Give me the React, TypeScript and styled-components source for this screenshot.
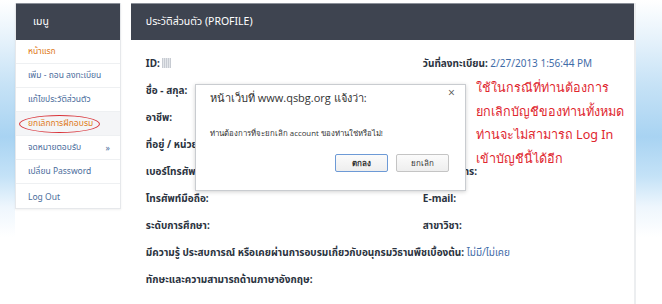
import React from "react";
import styled, { createGlobalStyle } from "styled-components";

const Global = createGlobalStyle`
  html, body { margin: 0; padding: 0; }
  body {
    width: 662px; height: 304px; overflow: hidden;
    font-family: Tahoma, "Noto Sans", "Noto Sans Thai", "DejaVu Sans", sans-serif;
  }
`;

const Page = styled.div`
  position: relative;
  width: 662px;
  height: 304px;
  overflow: hidden;
  background: linear-gradient(180deg, #ffffff 0%, #e4f1fb 14%, #c6e2f6 28%, #a8d3f2 45%, #c4e2f7 58%, #eef6fd 68%, #ffffff 78%, #ffffff 100%);
`;

const Frame = styled.div`
  margin-left: 15px;
  width: 621px;
  height: 304px;
  background: #ffffff;
  display: flex;
  align-items: flex-start;
  gap: 10px;
  padding-top: 3px;
  box-sizing: border-box;
`;

const Sidebar = styled.nav`
  width: 106px;
  box-sizing: border-box;
  border: 1px solid #e6e8eb;
  border-top: none;
  box-shadow: 0 1px 2px rgba(0,0,0,0.06);
  background: #fff;
`;

const PanelHead = styled.div<{ $pad: number }>`
  height: 37px;
  background: #3e4450;
  border-top: 1px solid #8b9099;
  box-sizing: border-box;
  color: #ffffff;
  display: flex;
  align-items: center;
  padding-left: ${(p) => p.$pad}px;
  font-size: 10.5px;
`;

const MenuItem = styled.div<{ $color: string; $active?: boolean }>`
  position: relative;
  height: 24px;
  box-sizing: border-box;
  display: flex;
  align-items: center;
  justify-content: space-between;
  padding: 0 10px 0 12px;
  font-size: 8.5px;
  color: ${(p) => p.$color};
  background: ${(p) => (p.$active ? "#f4f5f7" : "#fff")};
  border-bottom: 1px solid #eef0f2;
  &:last-child { border-bottom: none; }
`;

const Ellipse = styled.span`
  position: absolute;
  left: 3px;
  top: 3px;
  width: 81px;
  height: 18px;
  border: 1px solid #d9343a;
  border-radius: 50%;
  box-sizing: border-box;
`;

const Main = styled.section`
  position: relative;
  width: 504px;
  height: 301px;
  border-right: 2px solid #eceef0;
  background: #fff;
`;

const Body = styled.div`
  padding: 16px 0 0 15px;
  display: grid;
  grid-template-columns: 277px auto;
  grid-auto-rows: 27px;
  font-size: 10px;
  font-weight: bold;
  color: #2b3340;
`;

const Cell = styled.div<{ $span?: boolean }>`
  grid-column: ${(p) => (p.$span ? "1 / span 2" : "auto")};
  white-space: nowrap;
`;

const Value = styled.span`
  color: #3f6ca8;
  font-weight: normal;
`;

const Blur = styled.span`
  display: inline-block;
  width: 9px;
  height: 10px;
  vertical-align: -1px;
  background: repeating-linear-gradient(90deg, #c7cbd2 0 1px, #e3e6ea 1px 2px);
`;

const Dialog = styled.div`
  position: absolute;
  left: 64px;
  top: 81px;
  width: 271px;
  height: 107px;
  background: #fff;
  border: 1px solid #c9ccd0;
  box-shadow: 0 1px 4px rgba(0,0,0,0.18);
  box-sizing: border-box;
  padding: 6px 16px 0 14px;
  display: flex;
  flex-direction: column;
  font-family: "Open Sans", "Noto Sans", Tahoma, sans-serif;
`;

const DialogTitle = styled.div`
  display: flex;
  justify-content: space-between;
  font-size: 11px;
  line-height: 14px;
  color: #333;
`;

const Close = styled.span`
  font-size: 12px;
  line-height: 12px;
  color: #555;
  margin-top: -4px;
  margin-right: -6px;
`;

const DialogMsg = styled.div`
  margin-top: 23px;
  font-size: 7.8px;
  line-height: 10px;
  color: #333;
`;

const Buttons = styled.div`
  margin-top: 16px;
  display: flex;
  justify-content: flex-end;
  gap: 8px;
`;

const Btn = styled.button<{ $primary?: boolean }>`
  width: 53px;
  height: 18px;
  font-size: 8px;
  font-weight: ${(p) => (p.$primary ? "bold" : "normal")};
  color: #333;
  background: linear-gradient(#fbfbfb, #eeeeee);
  border: 1px solid ${(p) => (p.$primary ? "#6d9ad6" : "#c4c4c4")};
  border-radius: 2px;
  padding: 0;
  font-family: inherit;
`;

const Note = styled.div`
  position: absolute;
  left: 345px;
  top: 73px;
  font-size: 12.6px;
  line-height: 23.5px;
  white-space: nowrap;
  color: #e0272f;
  font-family: "Noto Sans", Tahoma, sans-serif;
`;

const menu = [
  { t: "หน้าแรก", c: "#e07b22" },
  { t: "เพิ่ม - ถอน ลงทะเบียน", c: "#4b6d9c" },
  { t: "แก้ไขประวัติส่วนตัว", c: "#4b6d9c" },
  { t: "ยกเลิกการฝึกอบรม", c: "#e07b22", active: true },
  { t: "จดหมายตอบรับ", c: "#4b6d9c", arrow: true },
  { t: "เปลี่ยน Password", c: "#4b6d9c" },
  { t: "Log Out", c: "#4b6d9c" },
];

export default function App() {
  return (
    <Page>
      <Global />
      <Frame>
        <Sidebar>
          <PanelHead $pad={17}>เมนู</PanelHead>
          {menu.map((m) => (
            <MenuItem key={m.t} $color={m.c} $active={m.active}>
              {m.active && <Ellipse />}
              <span>{m.t}</span>
              {m.arrow && <span>»</span>}
            </MenuItem>
          ))}
        </Sidebar>
        <Main>
          <PanelHead $pad={15}>ประวัติส่วนตัว (PROFILE)</PanelHead>
          <Body>
            <Cell>ID: <Blur /></Cell>
            <Cell>วันที่ลงทะเบียน: <Value>2/27/2013 1:56:44 PM</Value></Cell>
            <Cell $span>ชื่อ - สกุล:</Cell>
            <Cell $span>อาชีพ:</Cell>
            <Cell $span>ที่อยู่ / หน่วยงาน:</Cell>
            <Cell>เบอร์โทรศัพท์:</Cell>
            <Cell>เบอร์โทรสาร:</Cell>
            <Cell>โทรศัพท์มือถือ:</Cell>
            <Cell>E-mail:</Cell>
            <Cell>ระดับการศึกษา:</Cell>
            <Cell>สาขาวิชา:</Cell>
            <Cell $span>มีความรู้ ประสบการณ์ หรือเคยผ่านการอบรมเกี่ยวกับอนุกรมวิธานพืชเบื้องต้น: <Value>ไม่มี/ไม่เคย</Value></Cell>
            <Cell $span>ทักษะและความสามารถด้านภาษาอังกฤษ:</Cell>
          </Body>
          <Dialog>
            <DialogTitle>
              <span>หน้าเว็บที่ www.qsbg.org แจ้งว่า:</span>
              <Close>×</Close>
            </DialogTitle>
            <DialogMsg>ท่านต้องการที่จะยกเลิก account ของท่านใช่หรือไม่!</DialogMsg>
            <Buttons>
              <Btn $primary>ตกลง</Btn>
              <Btn>ยกเลิก</Btn>
            </Buttons>
          </Dialog>
          <Note>
            ใช้ในกรณีที่ท่านต้องการ<br />
            ยกเลิกบัญชีของท่านทั้งหมด<br />
            ท่านจะไม่สามารถ Log In<br />
            เข้าบัญชีนี้ได้อีก
          </Note>
        </Main>
      </Frame>
    </Page>
  );
}
